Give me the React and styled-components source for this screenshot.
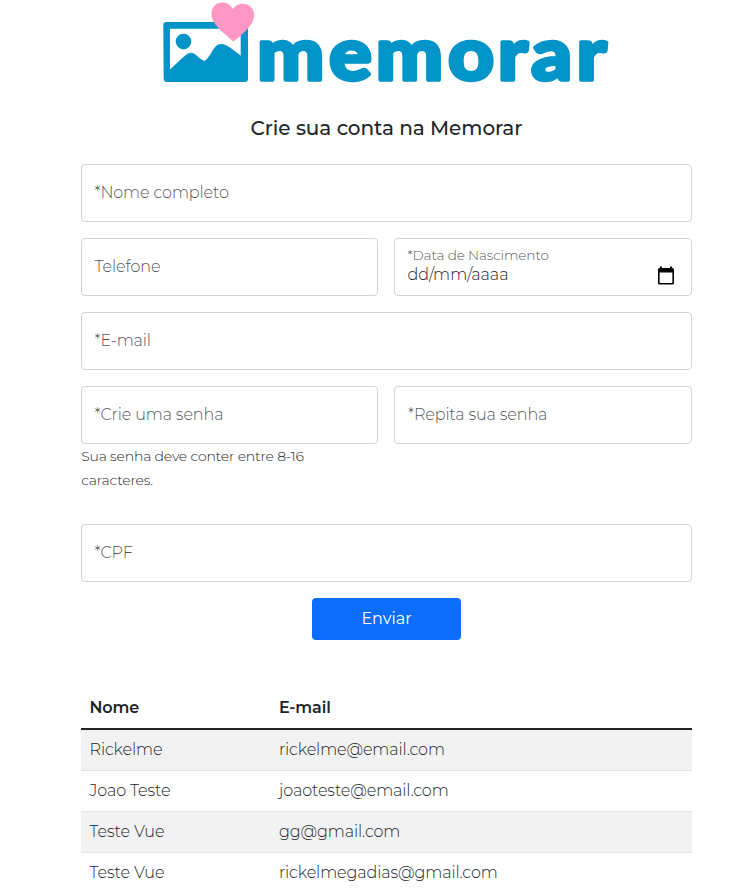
import React from "react";
import styled, { createGlobalStyle } from "styled-components";

const GlobalStyle = createGlobalStyle`
  *, *::before, *::after { box-sizing: border-box; }
  html { overflow: hidden; }
  body {
    margin: 0;
    background: #fff;
    color: #212529;
    font-family: Montserrat, Inter, sans-serif;
    font-size: 16px;
    font-weight: 300;
    line-height: 24px;
    letter-spacing: -0.11px;
  }
`;

const Page = styled.main`
  width: 748px;
  height: 890px;
  overflow: hidden;
  padding: 0 56.5px 0 80.5px;
  display: flex;
  flex-direction: column;
`;

const Logo = styled.svg`
  display: block;
  align-self: center;
  flex: none;
  width: 453px;
  height: 90px;
  overflow: visible;
`;

const Wordmark = styled.text`
  font-family: Lato, sans-serif;
  font-weight: 900;
  font-size: 74px;
  letter-spacing: 0;
  fill: #0094c8;
  stroke: #0094c8;
  stroke-width: 3.5px;
  stroke-linejoin: round;
`;

const Title = styled.h1`
  margin: 26px 0 24px;
  padding-left: 1px;
  font-size: 20px;
  font-weight: 500;
  line-height: 24px;
  letter-spacing: -0.04px;
  text-align: center;
`;

const Form = styled.form`
  display: flex;
  flex-direction: column;
  gap: 16px;
`;

const Row = styled.div`
  display: grid;
  grid-template-columns: 1fr 1fr;
  column-gap: 16px;
`;

const Field = styled.label`
  display: flex;
  align-items: center;
  height: 58px;
  padding: 0 12px 0 13px;
  border: 1px solid #ced4da;
  border-radius: 4px;
  color: rgba(33, 37, 41, 0.8);
`;

const DateField = styled(Field)`
  justify-content: space-between;
  padding-left: 12.5px;
`;

const DateText = styled.span`
  display: flex;
  flex-direction: column;
  padding-bottom: 4px;
`;

const DateLabel = styled.span`
  font-size: 13.6px;
  line-height: 19px;
`;

const DateValue = styled.span`
  color: #212529;
  line-height: 20px;
  letter-spacing: 0;
`;

const CalendarIcon = styled.svg`
  width: 18px;
  height: 20px;
  margin: 17px 3.5px 0 0;
`;

const Hint = styled.p`
  width: 240px;
  margin: 0 0 16px;
  padding-left: 0.7px;
  font-size: 14px;
  line-height: 24px;
  letter-spacing: -0.19px;
`;

const Submit = styled.button`
  align-self: center;
  width: 149px;
  height: 42px;
  padding: 0 0 0 1px;
  border: 0;
  border-radius: 4px;
  background: #0d6efd;
  color: #fff;
  font: inherit;
  font-weight: 400;
`;

const Table = styled.table`
  width: 100%;
  margin-top: 47px;
  border-collapse: separate;
  border-spacing: 0;
  table-layout: fixed;
`;

const HeadCell = styled.th`
  width: ${({ $width }) => $width || "auto"};
  height: 43px;
  padding: 0 8px 0 9px;
  border-bottom: 2px solid #212529;
  font-weight: 600;
  text-align: left;
`;

const BodyRow = styled.tr`
  background: ${({ $striped }) => ($striped ? "#f2f2f2" : "#fff")};
`;

const Cell = styled.td`
  height: 41px;
  padding: 0 8px 0 9px;
  border-bottom: 1px solid #dee2e6;
`;

const people = [
  { name: "Rickelme", email: "rickelme@email.com" },
  { name: "Joao Teste", email: "joaoteste@email.com" },
  { name: "Teste Vue", email: "gg@gmail.com" },
  { name: "Teste Vue", email: "rickelmegadias@gmail.com" },
];

function MemorarLogo() {
  return (
    <Logo viewBox="160 0 453 90" role="img" aria-label="memorar">
      <path
        fill="#0094c8"
        fillRule="evenodd"
        d="M166 22H245Q248 22 248 25V79Q248 82 245 82H167Q163.700 82 163.700 78.500L163.300 25Q163.300 22 166 22ZM170 28.700V69.500C176 64 182 58 186.500 54.500Q190.500 51.500 194.500 54C198 56 200 59.500 204.500 61C209 58.500 211.500 51 215.500 46.500Q219.500 42.500 225.500 45C231 47.500 236 52 240.700 55.700V28.700Z"
      />
      <circle cx="183.500" cy="41.600" r="7.800" fill="#0094c8" />
      <path
        fill="#ff97c4"
        d="M233.300 41.500C227 36 217.500 28.500 213.500 21.500C209.500 14 211.500 5.500 218.500 3C224.500 1.200 230 3.600 232.700 9C236 4.500 241.500 2.700 247 4.500C254 7.200 256 15 252.500 22C248 30 239.500 37 233.300 41.500Z"
      />
      <g transform="scale(1.08 1)">
        <Wordmark x="238 304.6 348 414.8 461 492 533.7" y="80">memorar</Wordmark>
      </g>
    </Logo>
  );
}

export default function App() {
  return (
    <>
      <GlobalStyle />
      <Page>
        <MemorarLogo />
        <Title>Crie sua conta na Memorar</Title>
        <Form>
          <Field>*Nome completo</Field>
          <Row>
            <Field>Telefone</Field>
            <DateField>
              <DateText>
                <DateLabel>*Data de Nascimento</DateLabel>
                <DateValue>dd/mm/aaaa</DateValue>
              </DateText>
              <CalendarIcon viewBox="0 0 18 20" aria-hidden="true">
                <path
                  fill="#000"
                  fillRule="evenodd"
                  d="M3 0.500H5V2H13V0.500H15V2H15.500Q17 2 17 3.500V17Q17 18.500 15.500 18.500H2.500Q1 18.500 1 17V3.500Q1 2 2.500 2H3ZM2.600 6.500V16.900H15.400V6.500Z"
                />
              </CalendarIcon>
            </DateField>
          </Row>
          <Field>*E-mail</Field>
          <Row>
            <div>
              <Field>*Crie uma senha</Field>
              <Hint>Sua senha deve conter entre 8-16 caracteres.</Hint>
            </div>
            <Field>*Repita sua senha</Field>
          </Row>
          <Field>*CPF</Field>
          <Submit type="button">Enviar</Submit>
        </Form>
        <Table>
          <thead>
            <tr>
              <HeadCell $width="189.5px">Nome</HeadCell>
              <HeadCell>E-mail</HeadCell>
            </tr>
          </thead>
          <tbody>
            {people.map((p, i) => (
              <BodyRow key={p.email} $striped={i % 2 === 0}>
                <Cell>{p.name}</Cell>
                <Cell>{p.email}</Cell>
              </BodyRow>
            ))}
          </tbody>
        </Table>
      </Page>
    </>
  );
}
